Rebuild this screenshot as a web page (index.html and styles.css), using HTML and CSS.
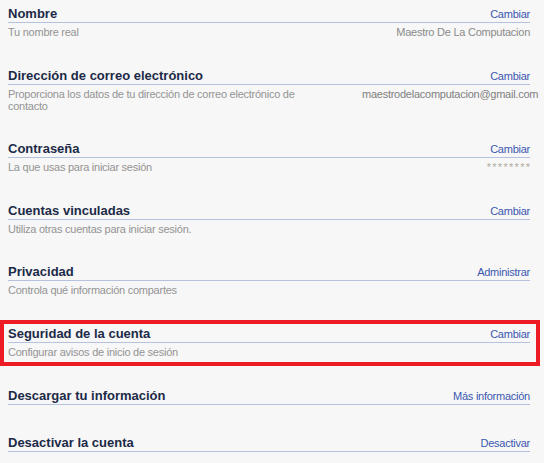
FILE: index.html
```html
<!DOCTYPE html>
<html lang="es">
<head>
<meta charset="utf-8">
<title>Configuración general de la cuenta</title>
<link rel="stylesheet" href="styles.css">
</head>
<body>
<div class="settings">
  <div class="item">
    <div class="head"><span class="title">Nombre</span><a class="action" href="#">Cambiar</a></div>
    <div class="sub"><span class="desc">Tu nombre real</span><span class="value">Maestro De La Computacion</span></div>
  </div>
  <div class="item">
    <div class="head"><span class="title">Dirección de correo electrónico</span><a class="action" href="#">Cambiar</a></div>
    <div class="sub"><span class="desc">Proporciona los datos de tu dirección de correo electrónico de contacto</span><span class="value email">maestrodelacomputacion@gmail.com</span></div>
  </div>
  <div class="item">
    <div class="head"><span class="title">Contraseña</span><a class="action" href="#">Cambiar</a></div>
    <div class="sub"><span class="desc">La que usas para iniciar sesión</span><span class="value stars">********</span></div>
  </div>
  <div class="item">
    <div class="head"><span class="title">Cuentas vinculadas</span><a class="action" href="#">Cambiar</a></div>
    <div class="sub"><span class="desc">Utiliza otras cuentas para iniciar sesión.</span></div>
  </div>
  <div class="item">
    <div class="head"><span class="title">Privacidad</span><a class="action" href="#">Administrar</a></div>
    <div class="sub"><span class="desc">Controla qué información compartes</span></div>
  </div>
  <div class="item highlighted">
    <div class="head"><span class="title">Seguridad de la cuenta</span><a class="action" href="#">Cambiar</a></div>
    <div class="sub"><span class="desc">Configurar avisos de inicio de sesión</span></div>
  </div>
  <div class="item">
    <div class="head"><span class="title">Descargar tu información</span><a class="action" href="#">Más información</a></div>
  </div>
  <div class="item">
    <div class="head"><span class="title">Desactivar la cuenta</span><a class="action" href="#">Desactivar</a></div>
  </div>
</div>
</body>
</html>
```
FILE: styles.css
```css
html, body {
  margin: 0;
  background: #f7f7f7;
}
body {
  font-family: "Liberation Sans", Arial, sans-serif;
  width: 544px;
  height: 463px;
  overflow: hidden;
}
.settings {
  padding: 6px 14px 0 8px;
  display: flex;
  flex-direction: column;
  gap: 30.6px;
}
.item {
  position: relative;
}
.head {
  display: flex;
  justify-content: space-between;
  align-items: baseline;
  height: 16px;
  border-bottom: 1px solid #b5c2dd;
}
.title {
  font-size: 13px;
  line-height: 16px;
  font-weight: bold;
  color: #1c2a47;
}
.action {
  font-size: 11px;
  line-height: 16px;
  letter-spacing: -0.25px;
  color: #3b58b0;
  text-decoration: none;
}
.sub {
  display: grid;
  grid-template-columns: 354px 1fr;
  padding-top: 3px;
  margin-bottom: -1px;
  font-size: 11px;
  line-height: 12px;
  letter-spacing: -0.25px;
  color: #949494;
}
.desc {
  padding-right: 40px;
}
.value {
  text-align: right;
  white-space: nowrap;
  color: #8a8a8a;
}
.value.email {
  color: #808080;
}
.value.stars {
  color: #b0aba0;
  letter-spacing: 1.3px;
  margin-right: -1.3px;
}
.highlighted::after {
  content: "";
  position: absolute;
  top: -6px;
  left: -8px;
  right: -10px;
  bottom: -9px;
  border: 4px solid #ed1c24;
  pointer-events: none;
}
```
